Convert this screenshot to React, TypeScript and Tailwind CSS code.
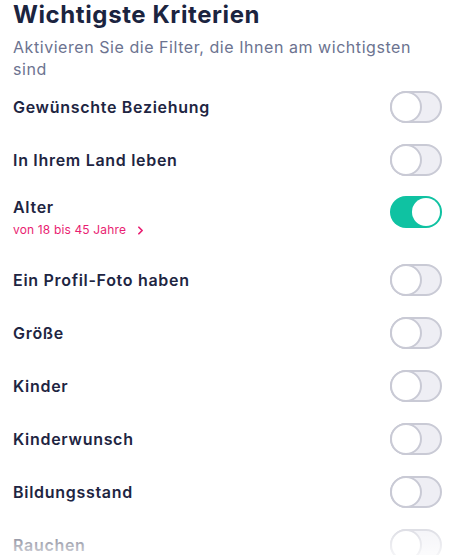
import React from 'react';
import { ChevronRight } from 'lucide-react';

type Filter = { label: string; on?: boolean; detail?: string };

const filters: Filter[] = [
  { label: 'Gewünschte Beziehung' },
  { label: 'In Ihrem Land leben' },
  { label: 'Alter', on: true, detail: 'von 18 bis 45 Jahre' },
  { label: 'Ein Profil-Foto haben' },
  { label: 'Größe' },
  { label: 'Kinder' },
  { label: 'Kinderwunsch' },
  { label: 'Bildungsstand' },
  { label: 'Rauchen' },
];

const Toggle = ({ on }: { on?: boolean }) => (
  <div
    className={
      on
        ? 'relative w-[52px] h-[32px] shrink-0 rounded-full bg-[#0fc2a2]'
        : 'relative w-[52px] h-[32px] shrink-0 rounded-full bg-[#eeeef4] border-2 border-[#c9cad5]'
    }
  >
    {on ? (
      <div className="absolute right-[2px] top-[2px] w-[28px] h-[28px] rounded-full bg-white" />
    ) : (
      <div className="absolute left-[-2px] top-[-2px] w-[32px] h-[32px] rounded-full bg-white border-2 border-[#c9cad5]" />
    )}
  </div>
);

export default function App() {
  return (
    <div
      className="relative w-[450px] h-[555px] overflow-hidden bg-white pl-[13px] pr-[8px]"
      style={{ fontFamily: 'Inter, "Liberation Sans", sans-serif' }}
    >
      <h1 className="text-[24px] leading-[30px] font-bold tracking-[0.6px] text-[#1b2440]">Wichtigste Kriterien</h1>
      <p className="mt-[6px] text-[16px] leading-[22px] tracking-[0.55px] text-[#6c7390] pr-[20px]">
        Aktivieren Sie die Filter, die Ihnen am wichtigsten sind
      </p>

      <div className="flex flex-col">
        {filters.map((f) =>
          f.detail ? (
            <div key={f.label} className="flex justify-between items-start pt-[10px] pb-[14px]">
              <div className="flex flex-col">
                <span className="text-[16px] leading-[22px] font-semibold tracking-[0.7px] text-[#1e2542]">{f.label}</span>
                <span className="mt-[3px] flex items-center gap-[8px] text-[12px] leading-[18px] tracking-[0.15px] text-[#e91e72]">
                  {f.detail}
                  <ChevronRight className="w-[13px] h-[13px]" strokeWidth={3.2} />
                </span>
              </div>
              <Toggle on={f.on} />
            </div>
          ) : (
            <div key={f.label} className="flex justify-between items-center h-[53px]">
              <span className="text-[16px] leading-[22px] font-semibold tracking-[0.7px] text-[#1e2542]">{f.label}</span>
              <Toggle on={f.on} />
            </div>
          )
        )}
      </div>

      <div className="absolute left-0 right-0 bottom-0 h-[50px] bg-gradient-to-b from-white/0 to-white/80 pointer-events-none" />
    </div>
  );
}
